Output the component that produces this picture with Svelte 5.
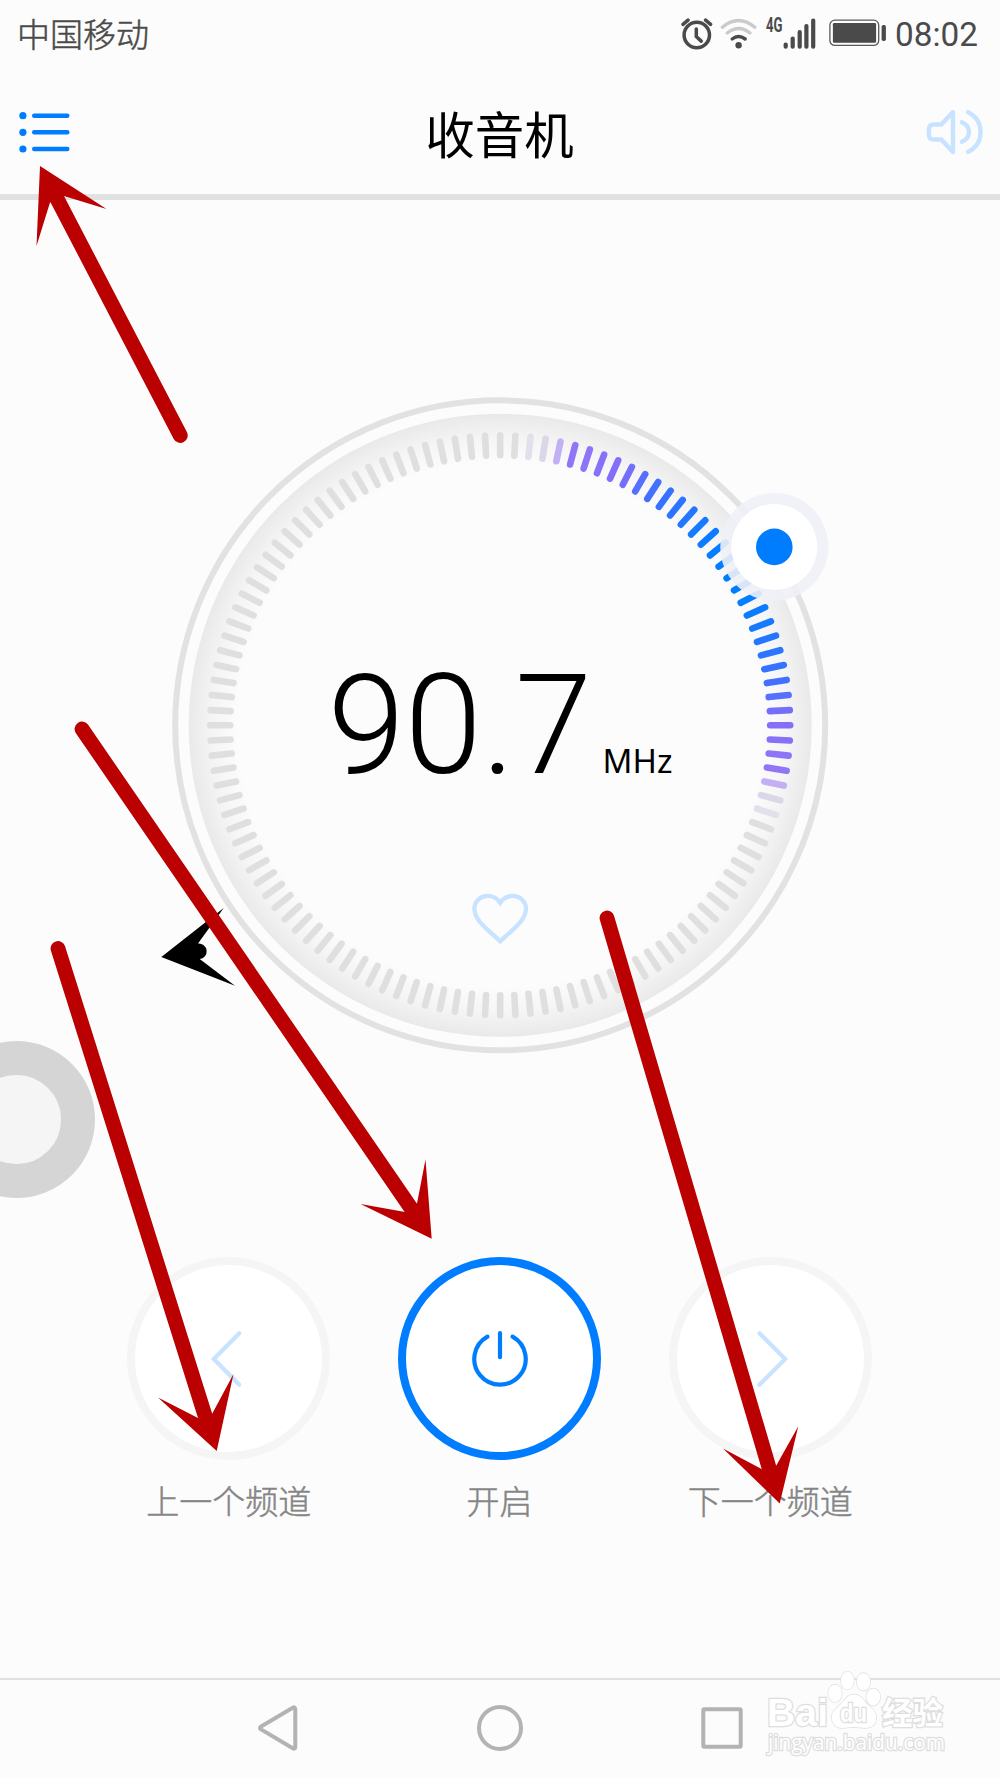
<script lang="ts">
	const TICKS = 120;
	const HANDLE_TICK = 19;

	// colour of a tick by its distance from the handle
	const tickColors = [
		'#007dff',
		'#007dff',
		'#047dff',
		'#0b7cff',
		'#167aff',
		'#2377ff',
		'#2c75ff',
		'#3772ff',
		'#4470fe',
		'#566ffd',
		'#746ffa',
		'#836ff8',
		'#8672f8',
		'#8e75f8',
		'#9075f7',
		'#c3aff4',
		'#dbd7e8',
		'#e2e0eb'
	];

	const ticks = Array.from({ length: TICKS }, (_, i) => ({
		angle: (i * 360) / TICKS,
		color: tickColors[Math.abs(i - HANDLE_TICK)] ?? '#dfdfdf'
	}));

	const bars = [
		{ x: 20, y: 24 },
		{ x: 27, y: 18 },
		{ x: 34, y: 11.5 },
		{ x: 40.7, y: 5.5 },
		{ x: 47.5, y: 0 }
	];

	const arrows = [
		{ tail: [180.3, 435.5], neck: [53, 191], head: '40,166 106.5,209 64,196 50,202.5 36.5,246' },
		{
			tail: [82, 729],
			neck: [414, 1212.5],
			head: '431.7,1238.7 360.5,1204 405,1212 417,1203.5 425.5,1159.5'
		},
		{
			tail: [58, 948.5],
			neck: [208, 1425],
			head: '216.7,1451 158,1397.5 198,1418 212.3,1413.5 233.5,1374'
		},
		{
			tail: [607, 918],
			neck: [771.5, 1476],
			head: '779.7,1503.5 723,1448.5 762.5,1469.5 776.3,1465.5 798.3,1426.3'
		}
	];
</script>

<div class="screen">
	<div class="status">
		<span class="carrier">中国移动</span>
		<div class="indicators">
			<svg class="alarm" width="32" height="32" viewBox="681 18 32 32">
				<circle cx="696.8" cy="35" r="12.7" />
				<path d="M696.3 29v7.5l4.9 4.6M683 24.4l5-4.3M710.6 24.4l-5-4.3" />
			</svg>
			<svg class="wifi" width="37" height="32" viewBox="720.5 17 37 32">
				<path class="weak" d="M722.9 26.2q16-13.6 32.4 0M727.8 32q11.4-9 22.6 0" />
				<path d="M732.7 38q6.3-4.8 13 0" />
				<circle cx="739.1" cy="44.2" r="3.2" />
			</svg>
			<svg class="signal" width="52" height="34" viewBox="0 0 52 34">
				<text x="1" y="15.2" textLength="16.5" lengthAdjust="spacingAndGlyphs">4G</text>
				{#each bars as bar}
					<rect x={bar.x - 1.4} y={bar.y + 1.5} width="4.2" height={30.2 - bar.y} rx="2" />
				{/each}
			</svg>
			<svg class="battery" width="58" height="28" viewBox="829 19 58 28">
				<rect class="shell" x="829.9" y="20.2" width="48.8" height="25.2" rx="5" />
				<rect x="832.9" y="23.1" width="43.2" height="19.6" rx="1.2" />
				<rect x="881.6" y="25" width="4.3" height="16" rx="1.8" />
			</svg>
			<span class="time">08:02</span>
		</div>
	</div>

	<header>
		<button class="icon" aria-label="menu">
			<svg width="54" height="46" viewBox="17 109 54 46">
				{#each [115.7, 132.3, 149] as y}
					<circle cx="22.9" cy={y} r="3.6" />
					<path d="M34.2 {y}h33.1" />
				{/each}
			</svg>
		</button>
		<h1>收音机</h1>
		<button class="icon speaker" aria-label="speaker">
			<svg width="60" height="50" viewBox="926 107.5 60 50">
				<path d="M942.3 125h-7.5q-4.8 0-4.8 4.5v6q0 4.5 4.8 4.5h7.5l11.7 12.4V112.6z" />
				<path d="M962.8 122.8q7.2 3 7.2 9.7t-7.2 9.7M969.2 112.6q12.4 6.5 12.4 19.8t-12.4 20" />
			</svg>
		</button>
	</header>

	<main>
		<svg class="dial" width="664" height="664" viewBox="-332.2 -332.3 664 664">
			<defs>
				<radialGradient id="rim" gradientUnits="userSpaceOnUse" cx="0" cy="0" r="312">
					<stop offset="0.84" stop-color="#fcfcfc" />
					<stop offset="0.92" stop-color="#f5f5f5" />
					<stop offset="1" stop-color="#e9e9e9" />
				</radialGradient>
			</defs>
			<circle class="ring" r="325" />
			<circle r="311.5" fill="url(#rim)" />
			{#each ticks as tick}
				<line
					class="tick"
					y1="-290"
					y2="-270"
					stroke={tick.color}
					transform="rotate({tick.angle})"
				/>
			{/each}
			<g transform="translate(274.1 -178.4)">
				<circle class="halo" r="54" />
				<circle r="43" fill="#fff" />
				<circle r="18.3" fill="#007dff" />
			</g>
			<text class="frequency" x="-172.4" y="47.3">90.7</text>
			<text class="unit" x="102.3" y="47.4">MHz</text>
			<path
				class="heart"
				d="M0 216C-10 206-25.8 196-25.8 183.5C-25.8 176-19.5 170.6-12.6 170.6C-7 170.6-3 173 0 177.5C3 173 7 170.6 12.6 170.6C19.500 170.6 25.8 176 25.8 183.5C25.8 196 10 206 0 216z"
			/>
		</svg>

		<div class="controls">
			<div class="control">
				<button aria-label="previous">
					<svg width="60" height="60" viewBox="-30 -30 60 60">
						<path d="M10.3-25.8L-15.2 0L10.3 25.8" />
					</svg>
				</button>
				<span>上一个频道</span>
			</div>
			<div class="control power">
				<button aria-label="power">
					<svg width="60" height="60" viewBox="-30 -30 60 60">
						<path d="M-12.6-22.4A25.7 25.7 0 1 0 12.6-22.4M0-25.8V-1.8" />
					</svg>
				</button>
				<span>开启</span>
			</div>
			<div class="control">
				<button aria-label="next">
					<svg width="60" height="60" viewBox="-30 -30 60 60">
						<path d="M-10.5-25.8L15.2 0L-10.5 25.8" />
					</svg>
				</button>
				<span>下一个频道</span>
			</div>
		</div>
	</main>

	<nav>
		<svg width="50" height="50" viewBox="-25 -25 50 50">
			<path d="M-17.3-1.2L14.7-20.3Q17.3-21.5 17.3-18.5V18.5Q17.3 21.5 14.7 20.3L-17.3 1.2Q-18.8 0-17.3-1.2z" />
		</svg>
		<svg width="50" height="50" viewBox="-25 -25 50 50"><circle r="21" /></svg>
		<svg width="50" height="50" viewBox="-25 -25 50 50">
			<rect x="-18.7" y="-18.7" width="37.4" height="37.4" rx="1" />
		</svg>
	</nav>

	<div class="assist"></div>

	<svg class="overlay" width="1000" height="1778" viewBox="0 0 1000 1778">
		<path d="M161.3 957L223.7 908L198 943.5A7.6 7.6 0 1 1 199.7 959L235 985.7z" />
		{#each arrows as { tail, neck, head }}
			<g class="arrow">
				<line x1={tail[0]} y1={tail[1]} x2={neck[0]} y2={neck[1]} />
				<polygon points={head} />
			</g>
		{/each}
		<g class="watermark">
			<text class="brand" x="767" y="1726" textLength="61">Bai</text>
			<ellipse cx="835" cy="1693.3" rx="6.8" ry="8.8" />
			<ellipse cx="847.4" cy="1680.6" rx="6.6" ry="9" />
			<ellipse cx="863.5" cy="1681.8" rx="6.9" ry="8.8" />
			<ellipse cx="873.3" cy="1697" rx="7" ry="8.6" />
			<path
				d="M854 1694.5c8 0 10 7 15 11.5c5 4.5 8 7 7.3 13c-.7 6-5 9-11 9c-4 0-7-1-11.3-1s-7 1-12 1c-6 0-10-4-10.3-10c-.3-6 4-9 8.3-13c5-5 7-10.5 14-10.5z"
			/>
			<text class="du" x="840" y="1722" textLength="27" lengthAdjust="spacingAndGlyphs">du</text>
			<text class="cn" x="882" y="1724" textLength="61" lengthAdjust="spacingAndGlyphs">经验</text>
			<text class="url" x="768" y="1750" textLength="177" lengthAdjust="spacingAndGlyphs">
				jingyan.baidu.com
			</text>
		</g>
	</svg>
</div>

<style>
	:global(body) {
		margin: 0;
		background: #fcfcfc;
	}

	.screen {
		position: relative;
		display: flex;
		flex-direction: column;
		width: 1000px;
		height: 1778px;
		overflow: hidden;
		background: #fcfcfc;
		font-family: Roboto, 'Noto Sans CJK SC', sans-serif;
	}

	button {
		padding: 0;
		border: none;
		background: none;
	}

	svg {
		display: block;
		flex: none;
	}

	.status {
		display: flex;
		justify-content: space-between;
		align-items: center;
		box-sizing: border-box;
		height: 68px;
		padding: 0 22px 0 17px;
		color: #4a4a4a;
	}

	.carrier {
		margin-top: -2px;
		font-family: 'Noto Sans CJK SC', sans-serif;
		font-size: 33px;
		font-weight: 300;
		-webkit-text-stroke: 0.5px #4a4a4a;
	}

	.indicators {
		display: flex;
		align-items: center;
		fill: #4a4a4a;
	}

	.alarm {
		fill: none;
		stroke: #4a4a4a;
		stroke-width: 3.5;
		stroke-linecap: round;
	}

	.wifi {
		margin-left: 7px;
	}

	.wifi path {
		fill: none;
		stroke: #4a4a4a;
		stroke-width: 3.4;
		stroke-linecap: round;
	}

	.wifi path.weak {
		stroke: #cacaca;
	}

	.signal {
		overflow: visible;
		margin-left: 8.5px;
		margin-top: -1px;
	}

	.signal text {
		font-size: 19.5px;
		font-weight: 700;
	}

	.battery {
		margin-left: 12px;
		margin-top: -2px;
	}

	.battery .shell {
		fill: none;
		stroke: #5a5a5a;
		stroke-width: 1.3;
	}

	.time {
		margin-left: 8px;
		padding-top: 2px;
		font-size: 33.3px;
		line-height: 66px;
	}

	header {
		display: flex;
		justify-content: space-between;
		align-items: center;
		box-sizing: border-box;
		height: 132px;
		padding: 2px 15px 0 17px;
		border-bottom: 6px solid #e1e1e1;
	}

	.icon {
		width: 60px;
		fill: #007dff;
		stroke: #007dff;
	}

	.icon path {
		stroke-width: 4.4;
		stroke-linecap: round;
		stroke-linejoin: round;
	}

	.icon circle {
		stroke: none;
	}

	.icon.speaker {
		fill: none;
		stroke: #c8e3ff;
	}

	h1 {
		margin: 2px 3px 0 0;
		font-family: 'Noto Sans CJK SC', sans-serif;
		font-size: 49.5px;
		font-weight: 400;
		line-height: 60px;
		color: #000;
	}

	main {
		flex: 1;
		display: flex;
		flex-direction: column;
		align-items: center;
	}

	.dial {
		margin-top: 193px;
	}

	.ring {
		fill: none;
		stroke: #e2e2e2;
		stroke-width: 6;
	}

	.tick {
		stroke-width: 6.6;
		stroke-linecap: round;
	}

	.halo {
		fill: #eff1f7;
		fill-opacity: 0.9;
	}

	.frequency {
		font-size: 138.8px;
		font-weight: 300;
	}

	.unit {
		font-family: 'Noto Sans', sans-serif;
		font-size: 33px;
	}

	.heart {
		fill: none;
		stroke: #c8e3ff;
		stroke-width: 4.3;
	}

	.controls {
		display: grid;
		grid-template-columns: repeat(3, 270.7px);
		margin-top: 200px;
		margin-right: 1px;
	}

	.control {
		display: flex;
		flex-direction: column;
		align-items: center;
	}

	.control button {
		display: flex;
		justify-content: center;
		align-items: center;
		box-sizing: border-box;
		width: 203px;
		height: 203px;
		border: 8.5px solid #f5f5f5;
		border-radius: 50%;
		background: #fff;
	}

	.control path {
		fill: none;
		stroke: #c8e3ff;
		stroke-width: 4.2;
		stroke-linecap: round;
		stroke-linejoin: miter;
	}

	.control.power button {
		border-color: #007dff;
	}

	.control.power path {
		stroke: #007dff;
	}

	.control span {
		margin-top: 18px;
		font-family: 'Noto Sans CJK SC', sans-serif;
		font-size: 33px;
		font-weight: 300;
		line-height: 44px;
		color: #858585;
		-webkit-text-stroke: 0.5px #858585;
	}

	nav {
		display: flex;
		justify-content: center;
		align-items: center;
		gap: 172px;
		box-sizing: border-box;
		height: 100px;
		padding-bottom: 2px;
		border-top: 2px solid #e1e1e1;
	}

	nav svg {
		fill: none;
		stroke: #b3b3b3;
		stroke-width: 4;
	}

	.assist {
		position: absolute;
		left: -62px;
		top: 1041px;
		box-sizing: border-box;
		width: 157px;
		height: 157px;
		border: 34px solid #d5d5d5;
		border-radius: 50%;
		background: #f5f5f5;
		background-clip: padding-box;
	}

	.overlay {
		position: absolute;
		left: 0;
		top: 0;
		pointer-events: none;
	}

	.arrow {
		fill: #ba0000;
		stroke: none;
	}

	.arrow line {
		stroke: #ba0000;
		stroke-width: 14.8;
		stroke-linecap: round;
	}

	.watermark {
		fill: #fff;
		stroke: #dedede;
		stroke-width: 1.3;
		paint-order: stroke;
	}

	.watermark text {
		stroke-width: 2.6;
	}

	.brand,
	.du {
		font-family: 'Liberation Sans', sans-serif;
		font-weight: 700;
	}

	.brand {
		font-size: 39px;
	}

	.du {
		font-size: 25px;
	}

	.cn {
		font-family: 'Noto Sans CJK SC', sans-serif;
		font-size: 31px;
		font-weight: 700;
	}

	.url {
		font-family: 'Open Sans', sans-serif;
		font-size: 21px;
	}
</style>
